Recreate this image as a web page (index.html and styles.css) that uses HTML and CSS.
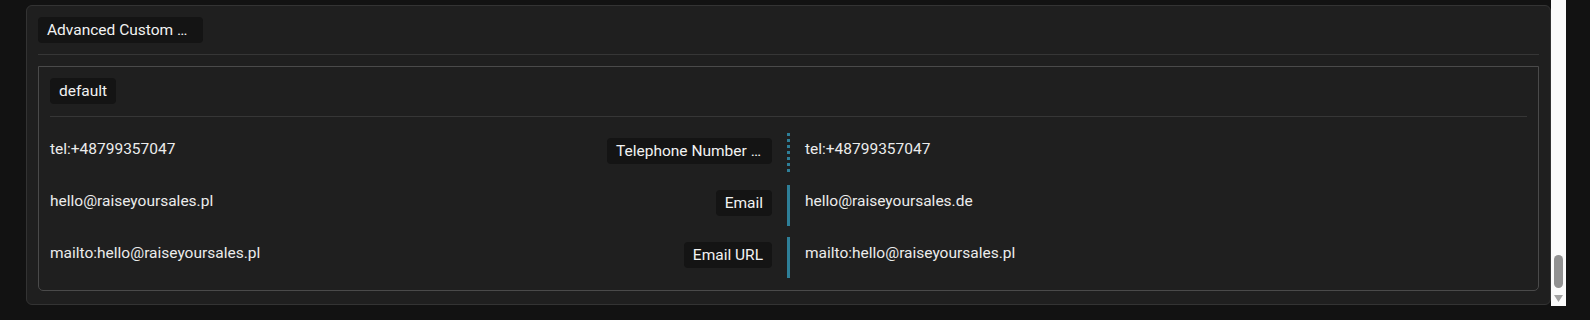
FILE: index.html
```html
<!DOCTYPE html>
<html lang="en">
<head>
    <meta charset="UTF-8">
    <title>Field Mapping</title>
    <link rel="stylesheet" href="styles.css">
</head>
<body>
    <div class="page">
        <div class="scroller">
            <div class="card">
                <div class="card-head">
                    <span class="chip wide" title="Advanced Custom Fields">Advanced Custom …</span>
                </div>

                <div class="group">
                    <div class="group-head">
                        <span class="chip">default</span>
                    </div>

                    <div class="rows">
                        <div class="row">
                            <div class="source">
                                <span class="value">tel:+48799357047</span>
                                <span class="chip wide" title="Telephone Number Link">Telephone Number …</span>
                            </div>
                            <div class="bar dotted"></div>
                            <div class="value">tel:+48799357047</div>
                        </div>
                        <div class="row">
                            <div class="source">
                                <span class="value">hello@raiseyoursales.pl</span>
                                <span class="chip">Email</span>
                            </div>
                            <div class="bar"></div>
                            <div class="value">hello@raiseyoursales.de</div>
                        </div>
                        <div class="row">
                            <div class="source">
                                <span class="value">mailto:hello@raiseyoursales.pl</span>
                                <span class="chip">Email URL</span>
                            </div>
                            <div class="bar"></div>
                            <div class="value">mailto:hello@raiseyoursales.pl</div>
                        </div>
                    </div>
                </div>
            </div>
        </div>

        <!-- fake scrollbar of the embedded panel -->
        <div class="scrollbar">
            <div class="thumb"></div>
            <svg class="arrow" width="9" height="7" viewBox="0 0 9 7">
                <polygon points="0,0 9,0 4.5,7" fill="#a3a3a3"/>
            </svg>
        </div>
    </div>
</body>
</html>
```

FILE: styles.css
```css
:root {
    --page: #121212;
    --card: #1f1f1f;
    --card-border: #333333;
    --group-border: #4a4a4a;
    --line: #363636;
    --chip: #141414;
    --text: #ececec;
    --accent: #2e7f98;
}

body {
    margin: 0;
    background: var(--page);
    color: var(--text);
    font-family: Roboto, "Liberation Sans", sans-serif;
    font-size: 15.5px;
}

.page {
    display: flex;
    width: 1566px;
    height: 306px;
}

.scroller {
    width: 1551px;
    padding: 5px 0 0 26px;
    box-sizing: border-box;
}

.card {
    background: var(--card);
    border: 1px solid var(--card-border);
    border-radius: 6px;
    padding: 11px 11px 13px;
}

.card-head {
    padding-bottom: 11px;
    border-bottom: 1px solid var(--line);
    margin-bottom: 11px;
}

.chip {
    display: inline-block;
    height: 26px;
    line-height: 26px;
    padding: 0 9px;
    box-sizing: border-box;
    background: var(--chip);
    border-radius: 4px;
    color: #f2f2f2;
    white-space: nowrap;
    vertical-align: top;
}

.chip.wide {
    width: 165px;
}

.group {
    border: 1px solid var(--group-border);
    border-radius: 0 0 5px 5px;
    padding: 11px 11px 12px;
}

.group-head {
    padding-bottom: 12px;
    border-bottom: 1px solid var(--line);
}

.rows {
    display: flex;
    flex-direction: column;
    gap: 11px;
    padding-top: 16px;
}

.row {
    display: grid;
    grid-template-columns: 1fr 3px 1fr;
    gap: 15px;
    height: 41px;
}

.source {
    display: flex;
    justify-content: space-between;
    align-items: flex-start;
    padding-top: 5px;
}

.value {
    line-height: 22px;
    white-space: nowrap;
}

.row > .value {
    padding-top: 5px;
}

.bar {
    background: var(--accent);
}

.bar.dotted {
    background: repeating-linear-gradient(to bottom, var(--accent) 0 3px, transparent 3px 6px);
}

.scrollbar {
    width: 15px;
    background: #fbfbfb;
    display: flex;
    flex-direction: column;
    justify-content: flex-end;
    align-items: center;
    padding-bottom: 4px;
    box-sizing: border-box;
}

.thumb {
    width: 9px;
    height: 33px;
    border-radius: 5px;
    background: #919191;
    margin-bottom: 7px;
}

.arrow {
    display: block;
}
```
